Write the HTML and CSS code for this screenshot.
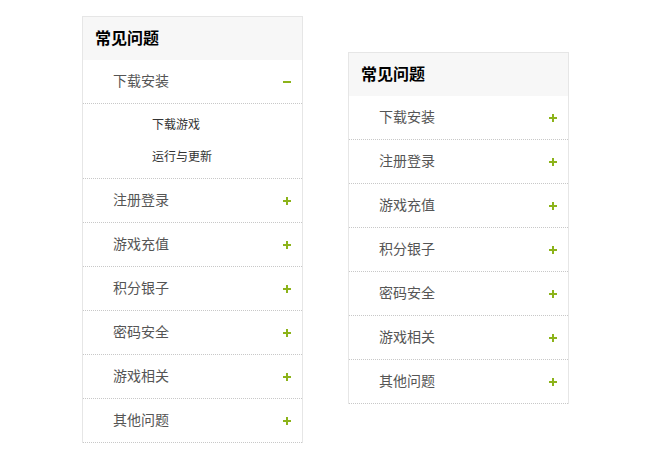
FILE: index.html
```html
<!DOCTYPE html>
<html lang="zh-CN">
<head>
<meta charset="utf-8">
<title>常见问题</title>
<link rel="stylesheet" href="styles.css">
</head>
<body>
<div class="page">
  <div class="panel">
    <div class="panel-head">常见问题</div>
    <div class="item open"><span class="label">下载安装</span><svg class="sign" width="8" height="8" viewBox="0 0 8 8"><rect x="0" y="3" width="8" height="2"/></svg></div>
    <div class="sub">
      <div class="sub-item">下载游戏</div>
      <div class="sub-item">运行与更新</div>
    </div>
    <div class="item"><span class="label">注册登录</span><svg class="sign" width="8" height="8" viewBox="0 0 8 8"><rect x="0" y="3" width="8" height="2"/><rect x="3" y="0" width="2" height="8"/></svg></div>
    <div class="item"><span class="label">游戏充值</span><svg class="sign" width="8" height="8" viewBox="0 0 8 8"><rect x="0" y="3" width="8" height="2"/><rect x="3" y="0" width="2" height="8"/></svg></div>
    <div class="item"><span class="label">积分银子</span><svg class="sign" width="8" height="8" viewBox="0 0 8 8"><rect x="0" y="3" width="8" height="2"/><rect x="3" y="0" width="2" height="8"/></svg></div>
    <div class="item"><span class="label">密码安全</span><svg class="sign" width="8" height="8" viewBox="0 0 8 8"><rect x="0" y="3" width="8" height="2"/><rect x="3" y="0" width="2" height="8"/></svg></div>
    <div class="item"><span class="label">游戏相关</span><svg class="sign" width="8" height="8" viewBox="0 0 8 8"><rect x="0" y="3" width="8" height="2"/><rect x="3" y="0" width="2" height="8"/></svg></div>
    <div class="item"><span class="label">其他问题</span><svg class="sign" width="8" height="8" viewBox="0 0 8 8"><rect x="0" y="3" width="8" height="2"/><rect x="3" y="0" width="2" height="8"/></svg></div>
  </div>

  <div class="panel panel-right">
    <div class="panel-head">常见问题</div>
    <div class="item"><span class="label">下载安装</span><svg class="sign" width="8" height="8" viewBox="0 0 8 8"><rect x="0" y="3" width="8" height="2"/><rect x="3" y="0" width="2" height="8"/></svg></div>
    <div class="item"><span class="label">注册登录</span><svg class="sign" width="8" height="8" viewBox="0 0 8 8"><rect x="0" y="3" width="8" height="2"/><rect x="3" y="0" width="2" height="8"/></svg></div>
    <div class="item"><span class="label">游戏充值</span><svg class="sign" width="8" height="8" viewBox="0 0 8 8"><rect x="0" y="3" width="8" height="2"/><rect x="3" y="0" width="2" height="8"/></svg></div>
    <div class="item"><span class="label">积分银子</span><svg class="sign" width="8" height="8" viewBox="0 0 8 8"><rect x="0" y="3" width="8" height="2"/><rect x="3" y="0" width="2" height="8"/></svg></div>
    <div class="item"><span class="label">密码安全</span><svg class="sign" width="8" height="8" viewBox="0 0 8 8"><rect x="0" y="3" width="8" height="2"/><rect x="3" y="0" width="2" height="8"/></svg></div>
    <div class="item"><span class="label">游戏相关</span><svg class="sign" width="8" height="8" viewBox="0 0 8 8"><rect x="0" y="3" width="8" height="2"/><rect x="3" y="0" width="2" height="8"/></svg></div>
    <div class="item"><span class="label">其他问题</span><svg class="sign" width="8" height="8" viewBox="0 0 8 8"><rect x="0" y="3" width="8" height="2"/><rect x="3" y="0" width="2" height="8"/></svg></div>
  </div>
</div>
</body>
</html>
```

FILE: styles.css
```css
html, body {
  margin: 0;
  padding: 0;
  background: #fff;
}
body {
  font-family: "Noto Sans CJK SC", "Noto Sans", sans-serif;
  color: #555;
}
.page {
  display: flex;
  align-items: flex-start;
  gap: 45px;
  padding: 16px 0 0 82px;
}
.panel {
  width: 219px;
  border: 1px solid #e6e6e6;
  border-bottom: none;
  background: #fff;
}
.panel-right {
  margin-top: 36px;
}
.panel-head {
  height: 40px;
  line-height: 40px;
  padding: 0 0 3px 12px;
  background: #f7f7f7;
  font-size: 16px;
  font-weight: bold;
  color: #000;
}
.item {
  height: 43px;
  display: flex;
  align-items: center;
  justify-content: space-between;
  padding: 0 11px 0 30px;
  border-bottom: 1px dotted #c8c8c8;
  font-size: 14px;
  color: #555;
}
.label {
  line-height: 20px;
  margin-bottom: 3px;
}
.sign {
  fill: #8cb31a;
  display: block;
}
.sub {
  padding: 4px 0 6px;
  border-bottom: 1px dotted #c8c8c8;
}
.sub-item {
  height: 32px;
  line-height: 32px;
  padding-left: 69px;
  font-size: 12px;
  color: #333;
}
```
